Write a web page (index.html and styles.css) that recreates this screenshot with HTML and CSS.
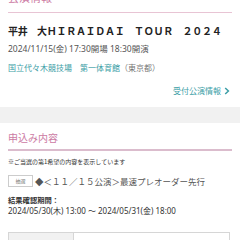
FILE: index.html
```html
<!DOCTYPE html>
<html lang="ja">
<head>
    <meta charset="UTF-8">
    <meta name="viewport" content="width=device-width, initial-scale=1.0">
    <title>公演情報</title>
    <link rel="stylesheet" href="styles.css">
</head>
<body>
    <div class="section section-top">
        <h2 class="section-head">公演情報</h2>
        <div class="title">平井　大ＨＩＲＡＩＤＡＩ　ＴＯＵＲ　２０２４</div>
        <div class="date">2024/11/15(金) 17:30開場 18:30開演</div>
        <div class="venue">国立代々木競技場　第一体育館<span class="pref">（東京都）</span></div>
        <div class="link-row">
            <a class="more-link" href="#">受付公演情報
                <svg width="6" height="8" viewBox="0 0 6 8"><path d="M1.2 1 L4.4 4 L1.2 7" fill="none" stroke="#3c9ea6" stroke-width="1.5"/></svg>
            </a>
        </div>
    </div>

    <div class="band"></div>

    <div class="section">
        <h2 class="section-head head-apply">申込み内容</h2>
        <div class="note">※ご当選の第1希望の内容を表示しています</div>
        <div class="entry-row">
            <span class="badge">抽選</span>
            <span class="entry-name">◆＜１１／１５公演＞最速プレオーダー先行</span>
        </div>
        <div class="period-label">結果確認期間：</div>
        <div class="period">2024/05/30(木) 13:00 ～ 2024/05/31(金) 18:00</div>
        <div class="info-table">
            <div class="info-key"></div>
            <div class="info-value"></div>
        </div>
    </div>
</body>
</html>
```

FILE: styles.css
```css
body {
    margin: 0;
    background-color: #ffffff;
    color: #333333;
    font-family: "Noto Sans", "Noto Sans CJK JP", sans-serif;
    overflow: hidden;
}
.section {
    padding: 0 8px;
}
.section-head {
    margin: 0;
    font-weight: normal;
    color: #cc7aa3;
}
.section-top .section-head {
    margin-top: -9px;
    font-size: 11px;
    line-height: 14px;
    padding-bottom: 7px;
    border-bottom: 1px solid #e8c4d4;
}
.title {
    margin-top: 11px;
    font-family: "Noto Sans CJK JP", sans-serif;
    font-size: 10px;
    line-height: 14px;
    font-weight: bold;
    letter-spacing: -0.3px;
    color: #222222;
    white-space: nowrap;
}
.date {
    margin-top: 5px;
    font-size: 8.5px;
    line-height: 12px;
    color: #555555;
}
.venue {
    margin-top: 7px;
    font-family: "Noto Sans CJK JP", sans-serif;
    font-size: 8px;
    line-height: 12px;
    color: #3c9ea6;
}
.pref {
    color: #777777;
}
.link-row {
    margin-top: 11px;
    display: flex;
    justify-content: flex-end;
    padding-right: 2px;
}
.more-link {
    display: flex;
    align-items: center;
    gap: 3px;
    font-family: "Noto Sans CJK JP", sans-serif;
    font-size: 8px;
    line-height: 12px;
    color: #3c9ea6;
    text-decoration: none;
}
.band {
    margin-top: 10px;
    height: 16px;
    background-color: #f1f1f1;
}
.head-apply {
    margin-top: 8px;
    font-family: "Noto Sans CJK JP", sans-serif;
    font-size: 10px;
    line-height: 14px;
    padding-bottom: 4px;
    border-bottom: 2px solid #dbbccd;
}
.note {
    margin-top: 7px;
    font-family: "Noto Sans CJK JP", sans-serif;
    font-size: 6px;
    line-height: 8px;
    color: #333333;
    white-space: nowrap;
}
.entry-row {
    margin-top: 9px;
    display: flex;
    align-items: center;
    gap: 2px;
}
.badge {
    box-sizing: border-box;
    width: 25px;
    height: 12px;
    border: 1px solid #cccccc;
    font-family: "Noto Sans CJK JP", sans-serif;
    font-size: 5px;
    line-height: 10px;
    text-align: center;
    color: #777777;
}
.entry-name {
    font-family: "Noto Sans CJK JP", sans-serif;
    font-size: 8.5px;
    line-height: 12px;
    color: #555555;
    white-space: nowrap;
}
.period-label {
    margin-top: 8px;
    font-family: "Noto Sans CJK JP", sans-serif;
    font-size: 7.3px;
    line-height: 10px;
    font-weight: bold;
    color: #333333;
}
.period {
    margin-top: 1px;
    font-size: 8px;
    line-height: 10px;
    color: #333333;
    white-space: nowrap;
}
.info-table {
    margin-top: 16px;
    margin-right: 2px;
    display: flex;
    height: 30px;
    border: 1px solid #d6d6d6;
}
.info-key {
    width: 64px;
    background-color: #f1f1f1;
    border-right: 1px solid #d6d6d6;
}
.info-value {
    flex: 1;
}
```
